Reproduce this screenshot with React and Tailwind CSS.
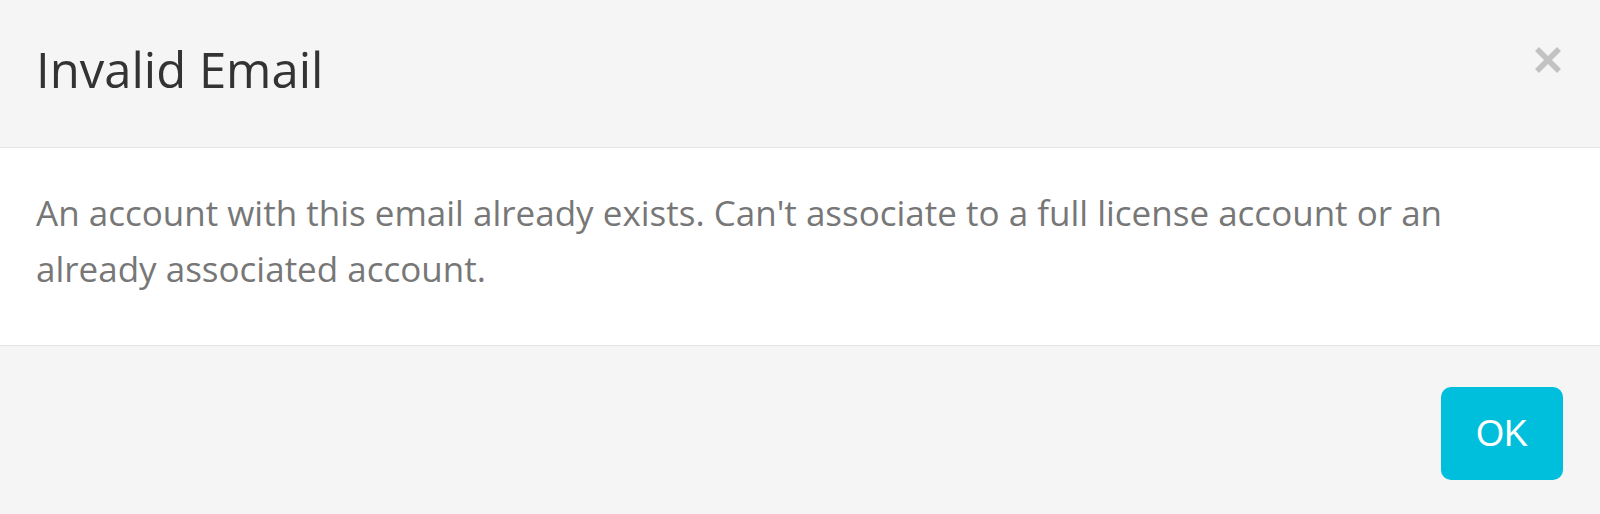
export default function App() {
  return (
    <div className="w-[1600px] h-[514px] overflow-hidden flex flex-col bg-[#f5f5f5]" style={{ fontFamily: '"Open Sans", sans-serif' }}>
      <div className="relative h-[148px] shrink-0 border-b border-[#e3e3e3] bg-[#f5f5f5] pl-[36px] pt-[36px]">
        <h4 className="text-[49px] leading-[67px] text-[#333333] font-normal tracking-normal">Invalid Email</h4>
        <button className="absolute right-[38px] top-[46px] w-[28px] h-[28px] flex items-center justify-center">
          <svg width="28" height="28" viewBox="0 0 28 28">
            <path d="M3 3 L25 25 M25 3 L3 25" stroke="#c2c2c2" strokeWidth="5.5" strokeLinecap="butt" />
          </svg>
        </button>
      </div>
      <div className="h-[198px] shrink-0 bg-white border-b border-[#e3e3e3] pl-[36px] pr-[36px] pt-[37px]">
        <p className="text-[35px] leading-[56px] text-[#777777] max-w-[1480px]">
          An account with this email already exists. Can't associate to a full license account or an already associated account.
        </p>
      </div>
      <div className="flex-1 flex justify-end items-start pr-[37px] pt-[41px] bg-[#f5f5f5]">
        <button
          className="w-[122px] h-[93px] rounded-[10px] bg-[#00bfdc] text-white text-[36px] flex items-center justify-center"
          style={{ fontFamily: '"Liberation Sans", Arial, sans-serif' }}
        >
          OK
        </button>
      </div>
    </div>
  );
}
